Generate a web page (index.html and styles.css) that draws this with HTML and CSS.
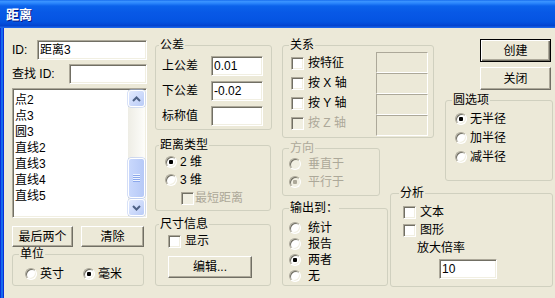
FILE: index.html
```html
<!DOCTYPE html>
<html lang="zh">
<head>
<meta charset="utf-8">
<title>距离</title>
<link rel="stylesheet" href="styles.css">
</head>
<body>
<div class="window">
  <div class="titlebar"><span class="title">距离</span></div>
  <div class="client">
    <div class="col1">
      <div class="field-row"><span class="lbl lbl-id">ID:</span><div class="edit edit-id">距离3</div></div>
      <div class="field-row"><span class="lbl lbl-find">查找 ID:</span><div class="edit edit-find"></div></div>
      <div class="listbox">
        <ul class="items">
          <li>点2</li><li>点3</li><li>圆3</li><li>直线2</li><li>直线3</li><li>直线4</li><li>直线5</li>
        </ul>
        <div class="vscroll">
          <div class="sb-btn"><svg width="9" height="6" viewBox="0 0 9 6"><polyline points="1,5 4.5,1.5 8,5" fill="none" stroke="#4D6185" stroke-width="2"/></svg></div>
          <div class="sb-track"><div class="sb-thumb"><span class="grip"></span></div></div>
          <div class="sb-btn"><svg width="9" height="6" viewBox="0 0 9 6"><polyline points="1,1 4.5,4.5 8,1" fill="none" stroke="#4D6185" stroke-width="2"/></svg></div>
        </div>
      </div>
      <div class="btn-row"><button class="btn btn-last">最后两个</button><button class="btn btn-clear">清除</button></div>
      <fieldset class="group g-unit">
        <legend>单位</legend>
        <div class="gbody unit-body">
          <div class="opt unit-opt"><span class="radio"></span>英寸</div>
          <div class="opt unit-opt"><span class="radio on"></span>毫米</div>
        </div>
      </fieldset>
    </div>

    <div class="col2">
      <fieldset class="group g-tol lg-near">
        <legend>公差</legend>
        <div class="gbody tol-body">
          <div class="tol-row"><span class="tol-lbl">上公差</span><div class="edit tol-edit">0.01</div></div>
          <div class="tol-row"><span class="tol-lbl">下公差</span><div class="edit tol-edit">-0.02</div></div>
          <div class="tol-row"><span class="tol-lbl">标称值</span><div class="edit tol-edit"></div></div>
        </div>
      </fieldset>
      <fieldset class="group g-dtype lg-near">
        <legend>距离类型</legend>
        <div class="gbody dtype-body">
          <div class="opt"><span class="radio on"></span>2 维</div>
          <div class="opt"><span class="radio"></span>3 维</div>
          <div class="opt dis shortest"><span class="check"></span>最短距离</div>
        </div>
      </fieldset>
      <fieldset class="group g-dim lg-near">
        <legend>尺寸信息</legend>
        <div class="gbody dim-body">
          <div class="opt"><span class="check"></span>显示</div>
          <button class="btn btn-edit">编辑...</button>
        </div>
      </fieldset>
    </div>

    <div class="right">
      <fieldset class="group g-rel">
        <legend>关系</legend>
        <div class="gbody rel-body">
          <div class="rel-opts">
            <div class="opt rel-opt"><span class="check"></span>按特征</div>
            <div class="opt rel-opt"><span class="check"></span>按 X 轴</div>
            <div class="opt rel-opt"><span class="check"></span>按 Y 轴</div>
            <div class="opt rel-opt dis"><span class="check"></span>按 Z 轴</div>
          </div>
          <div class="rel-boxes">
            <div class="edit dis-edit"></div>
            <div class="edit dis-edit"></div>
            <div class="edit dis-edit"></div>
            <div class="edit dis-edit"></div>
          </div>
        </div>
      </fieldset>

      <div class="cmd-btns">
        <button class="btn btn-cmd default">创建</button>
        <button class="btn btn-cmd">关闭</button>
      </div>

      <fieldset class="group g-circ">
        <legend>圆选项</legend>
        <div class="gbody circ-body">
          <div class="opt circ-opt"><span class="radio on"></span>无半径</div>
          <div class="opt circ-opt"><span class="radio"></span>加半径</div>
          <div class="opt circ-opt"><span class="radio"></span>减半径</div>
        </div>
      </fieldset>

      <fieldset class="group g-dir dis">
        <legend>方向</legend>
        <div class="gbody dir-body">
          <div class="opt wide-opt"><span class="radio"></span>垂直于</div>
          <div class="opt wide-opt"><span class="radio on"></span>平行于</div>
        </div>
      </fieldset>

      <fieldset class="group g-out">
        <legend>输出到：</legend>
        <div class="gbody out-body">
          <div class="opt wide-opt out-opt"><span class="radio"></span>统计</div>
          <div class="opt wide-opt out-opt"><span class="radio"></span>报告</div>
          <div class="opt wide-opt out-opt"><span class="radio on"></span>两者</div>
          <div class="opt wide-opt out-opt"><span class="radio"></span>无</div>
        </div>
      </fieldset>

      <fieldset class="group g-ana lg-far">
        <legend>分析</legend>
        <div class="gbody ana-body">
          <div class="opt ana-opt"><span class="check"></span>文本</div>
          <div class="opt ana-opt"><span class="check"></span>图形</div>
          <div class="opt zoom-lbl">放大倍率</div>
          <div class="edit zoom-edit">10</div>
        </div>
      </fieldset>
    </div>
  </div>
</div>
</body>
</html>
```

FILE: styles.css
```css
* { box-sizing: border-box; }
html, body { margin: 0; padding: 0; }
body {
  width: 555px;
  height: 298px;
  overflow: hidden;
  font: 12px/16px "Liberation Sans", "Noto Sans CJK SC", sans-serif;
  color: #000;
  background: #ECE9D8;
}
.window { width: 555px; height: 298px; display: flex; flex-direction: column; }

.titlebar {
  height: 28px;
  flex: none;
  display: flex;
  align-items: center;
  padding: 0 0 1px 6px;
  background: linear-gradient(to bottom, #0A5FE8 0, #3D95FF 1px, #2D88FD 3px, #0B62EB 6px, #0859E6 12px, #0656E4 18px, #0453DF 22px, #0346D4 25px, #0242C9 26px, #1A63E9 27px, #1A63E9 28px);
}
.title {
  color: #fff;
  font: bold 13px/16px "Noto Sans CJK SC", sans-serif;
  text-shadow: 1px 1px 0 #0A1882;
}

.client {
  flex: 1;
  display: flex;
  padding-left: 12px;
  background: linear-gradient(to right, #0831D9 0 1px, #166AEE 1px 3px, #0831D9 3px 4px, #ECE9D8 4px);
}

/* common controls */
.edit {
  height: 20px;
  background: #fff;
  border: 1px solid;
  border-color: #ACA899 #fff #fff #ACA899;
  box-shadow: inset 1px 1px #716F64, inset -1px -1px #F1EFE2;
  padding: 1px 1px 1px 2px;
  line-height: 16px;
  white-space: nowrap;
  overflow: hidden;
}
.btn {
  font: inherit;
  line-height: 16px;
  color: #000;
  background: #ECE9D8;
  border: 1px solid;
  border-color: #fff #716F64 #716F64 #fff;
  box-shadow: inset -1px -1px #ACA899;
  padding: 0;
}
.btn.default {
  border: 1px solid #000;
  box-shadow: inset 1px 1px #fff, inset -1px -1px #716F64, inset -2px -2px #ACA899;
}
.radio, .check {
  flex: none;
  position: relative;
  width: 13px;
  height: 13px;
  background: #fff;
  border: 1px solid;
  border-color: #ACA899 #fff #fff #ACA899;
  box-shadow: inset 1px 1px #716F64, inset -1px -1px #F1EFE2;
}
.radio { width: 12px; height: 12px; border-radius: 50%; }
.radio.on::after {
  content: "";
  position: absolute;
  left: 3px;
  top: 3px;
  width: 4px;
  height: 4px;
  border-radius: 1px;
  background: #000;
}
.opt { display: flex; align-items: center; height: 18px; white-space: nowrap; }
.opt .radio, .opt .check { margin-right: 3px; }
.dis, .dis legend { color: #ACA899; }
.dis .radio, .dis .check { background: #F1EFE2; }
.dis .radio.on::after { background: #ACA899; }

.group {
  margin: 0;
  padding: 0;
  min-width: 0;
  border: 1px solid #D0D0BF;
  border-radius: 3px;
}
.group legend {
  padding: 0 1px;
  margin-left: 6px;
  height: 14px;
  line-height: 14px;
  font-size: 12px;
}
.group.lg-near legend { margin-left: 3px; }
.group.lg-far legend { margin-left: 8px; }

/* column 1 */
.col1 { width: 135px; padding-top: 12px; display: flex; flex-direction: column; flex: none; }
.field-row { display: flex; align-items: center; height: 20px; }
.field-row + .field-row { margin-top: 4px; }
.lbl-id { width: 25px; }
.edit-id { width: 110px; }
.lbl-find { width: 57px; }
.edit-find { width: 78px; }

.listbox {
  margin-top: 4px;
  height: 130px;
  display: flex;
  background: #fff;
  border: 1px solid;
  border-color: #ACA899 #fff #fff #ACA899;
  box-shadow: inset 1px 1px #716F64, inset -1px -1px #F1EFE2;
  padding: 1px;
}
.items { flex: 1; list-style: none; margin: 0; padding: 2px 0 0 1px; overflow: hidden; }
.items li { height: 16px; line-height: 16px; white-space: nowrap; }
.vscroll { width: 17px; flex: none; display: flex; flex-direction: column; background: linear-gradient(to right, #EEEDE5, #FDFDFA); }
.sb-btn {
  height: 17px;
  flex: none;
  display: flex;
  align-items: center;
  justify-content: center;
  border: 1px solid #fff;
  border-radius: 3px;
  background: linear-gradient(135deg, #E3EBFE, #B9CBF7);
  box-shadow: 0 0 0 0.5px #B2C5F2;
}
.sb-track { flex: 1; display: flex; flex-direction: column; }
.sb-thumb {
  margin-top: 51px;
  height: 40px;
  display: flex;
  align-items: center;
  justify-content: center;
  border: 1px solid #fff;
  border-radius: 3px;
  background: linear-gradient(to right, #C9D8FC, #B6C9F7);
  box-shadow: 0 0 0 0.5px #A9BEF0;
}
.grip {
  width: 7px;
  height: 8px;
  background: repeating-linear-gradient(to bottom, #EEF4FE 0 1px, #8CA8EC 1px 2px);
}
.btn-row { margin-top: 8px; height: 21px; display: flex; gap: 8px; }
.btn-last { width: 61px; }
.btn-clear { width: 63px; }
.g-unit { width: 132px; height: 39px; }
.unit-body { display: flex; padding: 4px 0 0 12px; }
.unit-opt { width: 58px; }

/* column 2 */
.col2 { width: 117px; margin-left: 8px; padding-top: 10px; display: flex; flex-direction: column; flex: none; }
.g-tol { width: 117px; height: 92px; }
.tol-body { padding: 4px 0 0 6px; }
.tol-row { display: flex; align-items: center; height: 20px; }
.tol-row + .tol-row { margin-top: 5px; }
.tol-lbl { width: 49px; }
.tol-edit { width: 52px; }
.g-dtype { width: 116px; height: 73px; margin-top: 8px; }
.dtype-body { padding: 1px 0 0 9px; }
.shortest { margin-left: 16px; }
.shortest .check { margin-right: 1px; }
.g-dim { width: 116px; height: 69px; margin-top: 6px; }
.dim-body { padding: 1px 0 0 12px; }
.dim-body .check { margin-right: 4px; }
.btn-edit { display: block; width: 84px; height: 22px; margin-top: 6px; }

/* right area */
.right {
  margin-left: 10px;
  margin-top: 10px;
  display: grid;
  grid-template-columns: 106px 2px 43px 12px 35px 73px;
  grid-template-rows: 55px 48px 45px 15px 86px;
  align-items: start;
  justify-items: start;
}
.g-rel { grid-column: 1 / 4; grid-row: 1 / 3; width: 152px; height: 100px; }
.rel-body { display: flex; padding: 1px 5px 0 8px; }
.rel-opts { display: flex; flex-direction: column; }
.rel-opt { height: 20px; }
.rel-opt .check { margin-right: 4px; }
.rel-boxes { margin-left: auto; margin-top: -1px; display: flex; flex-direction: column; }
.dis-edit { width: 52px; height: 21px; background: #ECE9D8; box-shadow: none; border-color: #ACA899 #fff #fff #ACA899; }

.cmd-btns { grid-column: 6; grid-row: 1; margin-top: 1px; display: flex; flex-direction: column; gap: 5px; }
.btn-cmd { width: 71px; height: 23px; }

.g-circ { grid-column: 5 / 7; grid-row: 2 / 4; width: 108px; height: 88px; }
.circ-body { padding: 2px 0 0 9px; }
.circ-opt { height: 19px; }

.g-dir { grid-column: 1; grid-row: 3 / 5; width: 98px; height: 55px; }
.dir-body { padding: 0 0 0 6px; }
.wide-opt .radio { margin-right: 7px; }

.g-out { grid-column: 1; grid-row: 5; width: 106px; height: 85px; }
.out-body { padding: 5px 0 0 6px; }
.out-opt { height: 16px; }

.g-ana { grid-column: 3 / 7; grid-row: 4 / 6; width: 163px; height: 101px; }
.ana-body { padding: 3px 0 0 12px; }
.ana-opt .check { margin-right: 4px; }
.zoom-lbl { margin-left: 14px; }
.zoom-edit { width: 58px; margin-left: 36px; margin-top: 2px; }
```
